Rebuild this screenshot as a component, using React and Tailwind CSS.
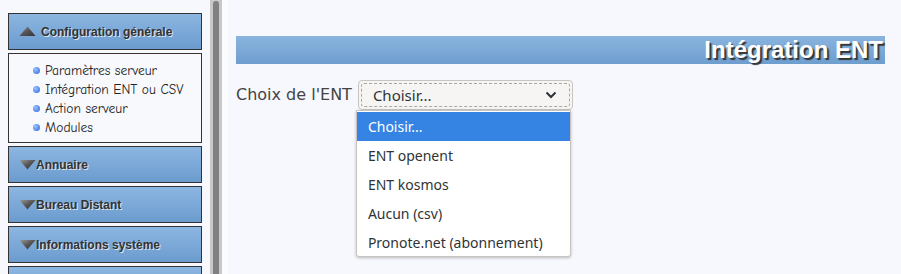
import React from "react";

const Tri = ({ up }) => (
  <svg width="17" height="11" viewBox="0 0 17 11" className="shrink-0">
    <defs>
      <linearGradient id={up ? "gu" : "gd"} x1="0" y1="0" x2="1" y2="1">
        <stop offset="0" stopColor="#9a9a9a" />
        <stop offset="0.5" stopColor="#555" />
        <stop offset="1" stopColor="#333" />
      </linearGradient>
    </defs>
    {up ? (
      <polygon points="8.5,0.5 16.5,10 0.5,10" fill={`url(#gu)`} />
    ) : (
      <polygon points="0.5,1 16.5,1 8.5,10.5" fill={`url(#gd)`} />
    )}
  </svg>
);

const Header = ({ label, up }) => (
  <div
    className={`h-[37px] shrink-0 border border-[#333] bg-gradient-to-b from-[#8cb6e0] to-[#6b9bcf] flex items-center ${up ? "pl-[10px] gap-[5px]" : "pl-[10px] gap-0"} font-['Liberation_Sans',Arial,sans-serif] font-bold text-[12px] text-[#333] [text-shadow:1px_1px_0_#dbe6f1]`}
  >
    <Tri up={up} />
    <span>{label}</span>
  </div>
);

const Bullet = () => (
  <span className="inline-block w-[7px] h-[7px] rounded-full bg-[radial-gradient(circle_at_35%_35%,#9cc2ff,#2a66e0)] mr-[5px] shrink-0" />
);

export default function App() {
  const items = ["Paramètres serveur", "Intégration ENT ou CSV", "Action serveur", "Modules"];
  const opts = ["ENT openent", "ENT kosmos", "Aucun (csv)", "Pronote.net (abonnement)"];
  return (
    <div className="flex h-[274px] w-[901px] overflow-hidden bg-[#f6f8fd]">
      <div className="w-[210px] shrink-0 pt-[13px] pl-[8px] pr-[8px] flex flex-col gap-[3px]">
        <Header label="Configuration générale" up />
        <div className="h-[90px] shrink-0 border border-[#333] bg-[#f8f9fd] pl-[24px] pt-[7px] font-['Comic_Sans_MS','Comic_Neue',cursive] text-[13.5px] text-[#222] leading-[19px]">
          {items.map((t) => (
            <div key={t} className="flex items-center">
              <Bullet />
              <span>{t}</span>
            </div>
          ))}
        </div>
        <Header label="Annuaire" />
        <Header label="Bureau Distant" />
        <Header label="Informations système" />
        <Header label="" />
      </div>
      <div className="w-[12px] shrink-0 bg-[#c8c8c8] flex justify-center pt-[1px]">
        <div className="w-[6px] h-full bg-[#7f807f] rounded-t-[3px]" />
      </div>
      <div className="w-[6px] shrink-0 bg-[#fbfcfe]" />
      <div className="flex-1 pl-[8px] pr-[16px] pt-[36px]">
        <div className="h-[28px] bg-gradient-to-b from-[#8ab4de] to-[#6e9ecf] flex items-center justify-end pr-[2px] font-['Liberation_Sans',Arial,sans-serif] font-bold text-[24px] text-white [text-shadow:2px_2px_1px_#333]">
          Intégration ENT
        </div>
        <div className="mt-[16px] flex items-center font-['DejaVu_Sans',sans-serif] text-[16px] text-[#444]">
          <span className="mr-[6px]">Choix de l'ENT</span>
          <div className="relative">
            <div className="w-[215px] h-[30px] rounded-[4px] border border-[#c8c4bf] bg-[#f6f5f4] p-[2px]">
              <div className="h-full rounded-[3px] border border-dashed border-[#a9a7a4] flex items-center justify-between pl-[11px] pr-[12px] font-['Noto_Sans',sans-serif] text-[15px] text-[#2e3436]">
                <span>Choisir...</span>
                <svg width="12" height="8" viewBox="0 0 12 8">
                  <path d="M1.5 1.5 L6 6 L10.5 1.5" fill="none" stroke="#2e3436" strokeWidth="2" />
                </svg>
              </div>
            </div>
            <div className="absolute left-[-2px] top-[30px] w-[215px] h-[147px] bg-white border border-[#c8c4bf] rounded-b-[3px] shadow-[0_1px_3px_rgba(0,0,0,0.25)] pt-[1px] font-['Noto_Sans',sans-serif] text-[14px] text-[#2e3436]">
              <div className="h-[29px] bg-[#3584e4] text-white flex items-center pl-[11px]">Choisir...</div>
              {opts.map((o) => (
                <div key={o} className="h-[29px] flex items-center pl-[11px]">{o}</div>
              ))}
            </div>
          </div>
        </div>
      </div>
    </div>
  );
}
